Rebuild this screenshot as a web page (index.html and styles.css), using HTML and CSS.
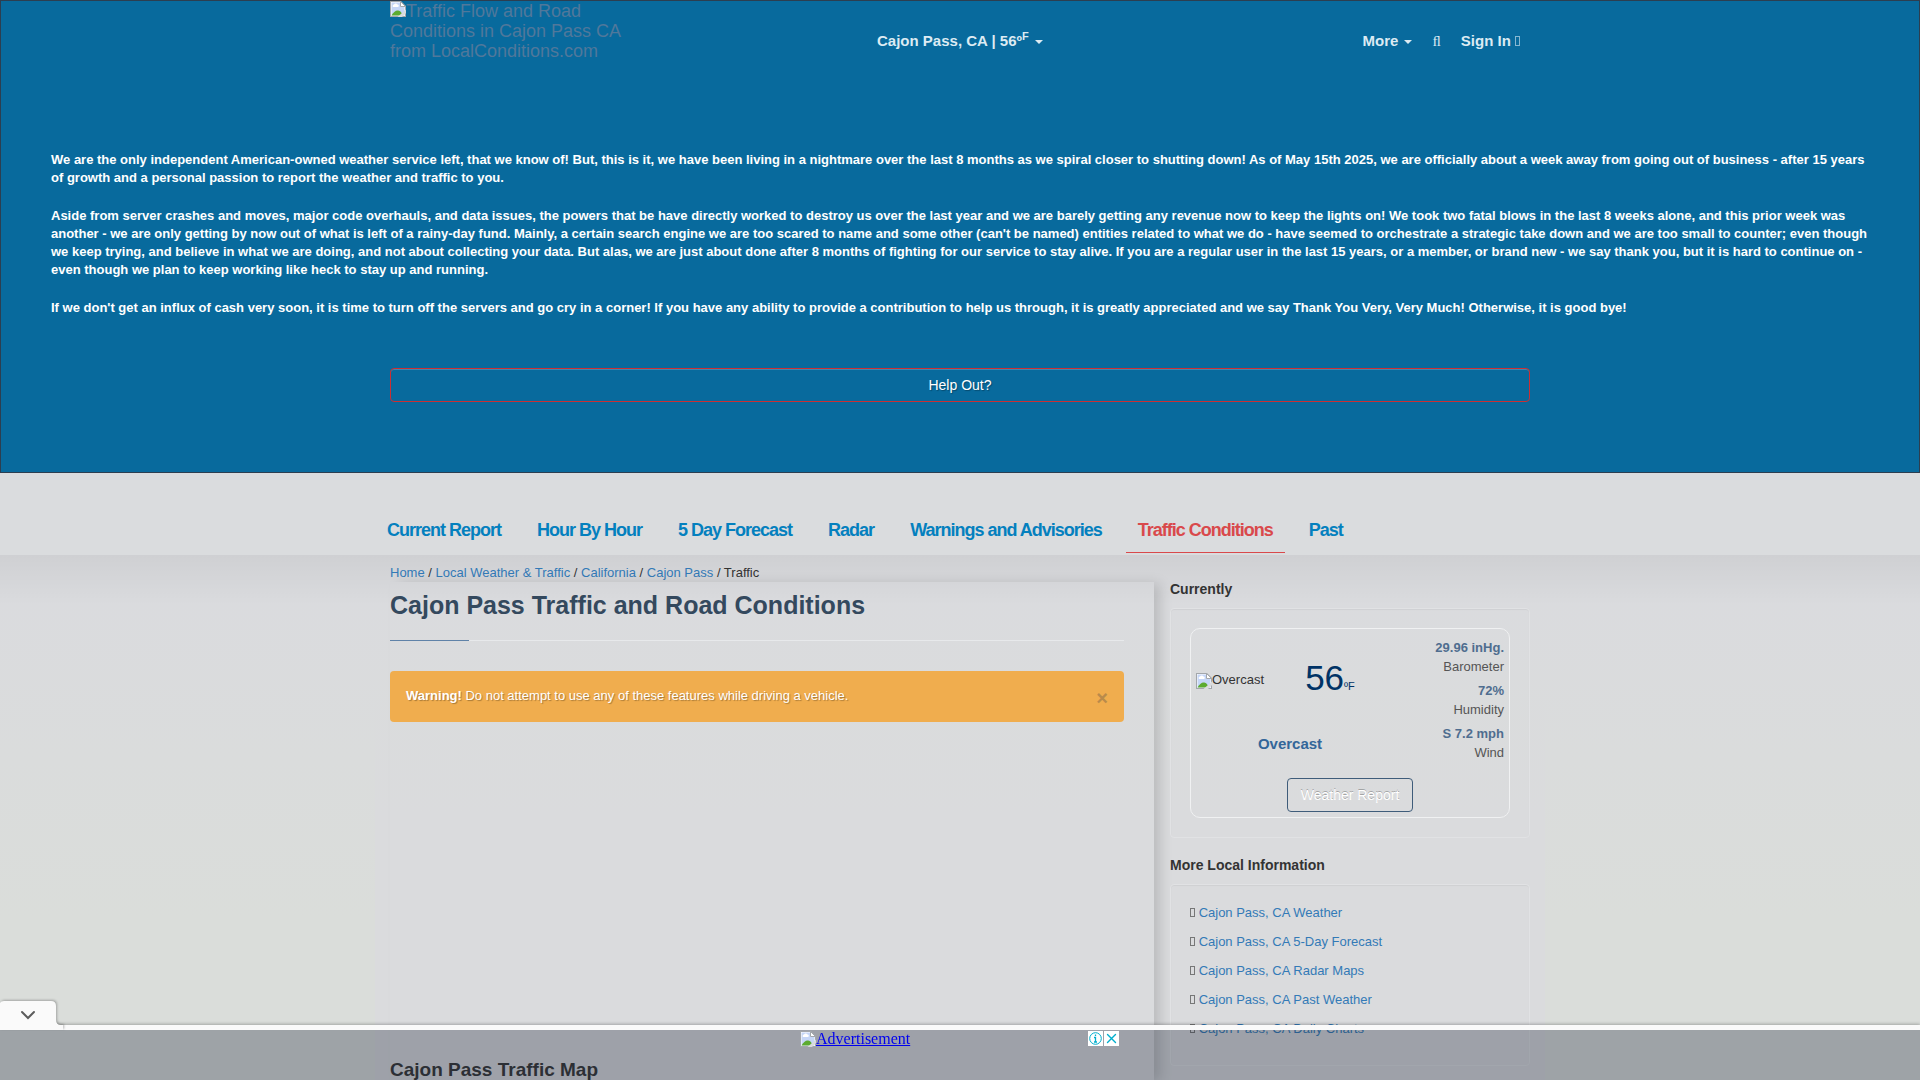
FILE: index.html
```html
<!DOCTYPE html>
<html lang="en">
<head>
<meta charset="utf-8">
<meta name="viewport" content="width=device-width, initial-scale=1">
<title>Cajon Pass Traffic and Road Conditions</title>
<link rel="stylesheet" href="styles.css">
</head>
<body>
<svg width="0" height="0" class="sprite" aria-hidden="true">
  <symbol id="missing" viewBox="0 0 16 16">
    <path d="M0 0h11l5 5v11H0z" fill="#a3a7ab"/>
    <path d="M1 1h9.500l4.500 4.500V15H1z" fill="#fff"/>
    <path d="M1.500 1.500h9v4h4v9h-13z" fill="#c5d6f7"/>
    <path d="M3 6a1.500 1.500 0 0 1 1-2.500 2 2 0 0 1 3.500 0A1.300 1.300 0 0 1 8 6z" fill="#fff"/>
    <path d="M1.500 14.500c1.500-3 4-5 6-5s4 1 5 5z" fill="#5cab30"/>
    <path d="M10.500 .5v5h5z" fill="#fff" stroke="#a3a7ab"/>
    <path d="M7.500 16l8.500-7.500V12l-4 4z" class="tear"/>
  </symbol>
</svg>

<header class="masthead">
  <div class="container topbar">
    <a class="logo" href="#"><svg class="missing" aria-hidden="true"><use href="#missing"/></svg>Traffic Flow and Road Conditions in Cajon Pass CA from LocalConditions.com</a>
    <a class="place" href="#">Cajon Pass, CA | 56º<sup>F</sup> <span class="caret"></span></a>
    <nav class="tools" aria-label="Account">
      <a href="#">More <span class="caret"></span></a>
      <a href="#" aria-label="Search"><span class="search-glyph">ﬂ</span></a>
      <a href="#">Sign In <span class="box-glyph"></span></a>
    </nav>
  </div>
  <div class="appeal">
    <p>We are the only independent American-owned weather service left, that we know of! But, this is it, we have been living in a nightmare over the last 8 months as we spiral closer to shutting down! As of May 15th 2025, we are officially about a week away from going out of business - after 15 years of growth and a personal passion to report the weather and traffic to you.</p>
    <p>Aside from server crashes and moves, major code overhauls, and data issues, the powers that be have directly worked to destroy us over the last year and we are barely getting any revenue now to keep the lights on! We took two fatal blows in the last 8 weeks alone, and this prior week was another - we are only getting by now out of what is left of a rainy-day fund. Mainly, a certain search engine we are too scared to name and some other (can't be named) entities related to what we do - have seemed to orchestrate a strategic take down and we are too small to counter; even though we keep trying, and believe in what we are doing, and not about collecting your data. But alas, we are just about done after 8 months of fighting for our service to stay alive. If you are a regular user in the last 15 years, or a member, or brand new - we say thank you, but it is hard to continue on - even though we plan to keep working like heck to stay up and running.</p>
    <p>If we don't get an influx of cash very soon, it is time to turn off the servers and go cry in a corner! If you have any ability to provide a contribution to help us through, it is greatly appreciated and we say Thank You Very, Very Much! Otherwise, it is good bye!</p>
  </div>
  <div class="container">
    <button class="help" type="button">Help Out?</button>
  </div>
</header>

<nav class="sections" aria-label="Reports">
  <div class="container section-links">
    <a href="#">Current Report</a>
    <a href="#">Hour By Hour</a>
    <a href="#">5 Day Forecast</a>
    <a href="#">Radar</a>
    <a href="#">Warnings and Advisories</a>
    <a href="#" class="active" aria-current="page">Traffic Conditions</a>
    <a href="#">Past</a>
  </div>
</nav>

<div class="page">
  <div class="container columns">
    <div class="primary">
      <nav class="crumbs" aria-label="Breadcrumb"><a href="#">Home</a> / <a href="#">Local Weather &amp; Traffic</a> / <a href="#">California</a> / <a href="#">Cajon Pass</a> / Traffic</nav>
      <main class="content">
        <h1>Cajon Pass Traffic and Road Conditions</h1>
        <div class="alert" role="alert">
          <span><strong>Warning!</strong> Do not attempt to use any of these features while driving a vehicle.</span>
          <button class="close" type="button" aria-label="Close">×</button>
        </div>
        <h2>Cajon Pass Traffic Map</h2>
      </main>
    </div>
    <aside class="sidebar">
      <h3>Currently</h3>
      <section class="well">
        <div class="now">
          <div class="sky"><svg class="missing" aria-hidden="true"><use href="#missing"/></svg>Overcast</div>
          <div class="temp">56<small>ºF</small></div>
          <div class="summary">Overcast</div>
          <dl class="readings">
            <div><dd>29.96 inHg.</dd><dt>Barometer</dt></div>
            <div><dd>72%</dd><dt>Humidity</dt></div>
            <div><dd>S 7.2 mph</dd><dt>Wind</dt></div>
          </dl>
          <button class="report" type="button">Weather Report</button>
        </div>
      </section>
      <h3>More Local Information</h3>
      <section class="well">
        <ul class="links">
          <li><span class="box-glyph"></span> <a href="#">Cajon Pass, CA Weather</a></li>
          <li><span class="box-glyph"></span> <a href="#">Cajon Pass, CA 5-Day Forecast</a></li>
          <li><span class="box-glyph"></span> <a href="#">Cajon Pass, CA Radar Maps</a></li>
          <li><span class="box-glyph"></span> <a href="#">Cajon Pass, CA Past Weather</a></li>
          <li><span class="box-glyph"></span> <a href="#">Cajon Pass, CA Daily Charts</a></li>
        </ul>
      </section>
    </aside>
  </div>
</div>

<div class="ad-bar">
  <button class="ad-toggle" type="button" aria-label="Collapse">
    <svg width="63" height="29" viewBox="0 0 63 29" aria-hidden="true">
      <path d="M0 29V2q1-2 4-2h47q5 0 5 5v14q0 5 5 5h2v5z" fill="#fafafa"/>
      <path d="M22 11l6 6 6-6" fill="none" stroke="#5c5c5c" stroke-width="2" stroke-linecap="round"/>
    </svg>
  </button>
  <div class="ad">
    <a href="#"><svg class="missing" aria-hidden="true"><use href="#missing"/></svg>Advertisement</a>
    <div class="ad-choices">
      <svg width="15" height="15" viewBox="0 0 15 15" aria-hidden="true"><path d="M0 0h15v15H0z" fill="#fff"/><circle cx="7.500" cy="7.500" r="5.800" fill="none" stroke="#00aecd"/><path d="M7.500 3.500v1.500M6 6.500h1.500v4M6 11h3" fill="none" stroke="#00aecd" stroke-width="1.300"/></svg>
      <svg width="15" height="15" viewBox="0 0 15 15" aria-hidden="true"><path d="M0 0h15v15H0z" fill="#fff"/><path d="M3.500 3.500l8 8M11.500 3.500l-8 8" stroke="#00aecd" stroke-width="1.400" stroke-linecap="round"/></svg>
    </div>
  </div>
</div>
</body>
</html>
```
FILE: styles.css
```css
* { box-sizing: border-box; }

body {
  margin: 0;
  min-height: 100vh;
  display: flex;
  flex-direction: column;
  font: 13px/19px "Liberation Sans", Arial, sans-serif;
  color: #333;
  background: linear-gradient(#dadbde 55%, #daddda 85%);
}

a { color: #337ab7; text-decoration: none; }
button { font-family: inherit; cursor: pointer; }
h1, h2, h3, p, dl, dd, ul { margin: 0; padding: 0; }

.sprite { position: absolute; }
.missing { width: 16px; height: 16px; vertical-align: bottom; }
.tear { fill: #dadbdd; }
.search-glyph { font-family: "Liberation Serif", serif; font-weight: 400; }
.box-glyph {
  display: inline-block;
  width: 5px;
  height: 9px;
  border: 1px solid currentColor;
  opacity: .6;
}
.container { width: 100%; max-width: 1170px; margin: 0 auto; padding: 0 15px; }

/* Header */
.masthead {
  background: #086a9d;
  border: 1px solid #2c3e50;
  padding-bottom: 70px;
}
.topbar { display: grid; grid-template-columns: 1fr auto 1fr; align-items: start; }
.logo { width: 240px; padding-bottom: 60px; color: #50789b; font-size: 18px; line-height: 20px; }
.logo .missing { vertical-align: baseline; }
.logo .tear { fill: #086a9d; }
.place, .tools { padding-top: 30px; font-size: 15px; font-weight: 700; line-height: 20px; }
.place, .tools a { color: #dcebf3; }
.place sup { font-size: 11px; line-height: 0; }
.tools { display: flex; justify-content: flex-end; gap: 20px; padding-right: 10px; }
.tools .box-glyph { height: 10px; }
.caret {
  display: inline-block;
  margin-left: 2px;
  vertical-align: middle;
  border: 4px solid transparent;
  border-top-color: currentColor;
  border-bottom: 0;
}
.appeal { padding: 30px 50px 51px; color: #fff; font-weight: 700; line-height: 18px; }
.appeal p + p { margin-top: 20px; }
.help {
  display: block;
  width: 100%;
  height: 34px;
  border: 1px solid #cc2f33;
  border-radius: 4px;
  background: none;
  box-shadow: inset 0 1px 0 rgba(255, 255, 255, .2);
  color: #fff;
  font-size: 14px;
  text-shadow: 1px 1px 1px rgba(0, 0, 0, .3);
}

/* Section tabs */
.sections { padding: 35px 0 2px; background: #dadcde; }
.section-links { display: flex; gap: 12px; padding: 0; }
.section-links a {
  padding: 12px 12px 11px;
  border-bottom: 1px solid transparent;
  color: #0480be;
  font-size: 18px;
  font-weight: 700;
  letter-spacing: -1px;
  line-height: 21px;
}
.section-links .active { color: #d9494b; border-color: #d9494b; }

/* Columns */
.page {
  flex: 1;
  display: flex;
  background: linear-gradient(rgba(0, 0, 0, .05), rgba(0, 0, 0, 0) 50px);
}
.columns {
  display: grid;
  grid-template-columns: minmax(0, 1fr) 360px;
  gap: 16px;
  background: linear-gradient(rgba(218, 219, 221, 0) 60px, #dadbdd 260px);
}
.primary { display: flex; flex-direction: column; }
.crumbs { padding: 8px 0 0; }
.content {
  flex: 1;
  padding-right: 30px;
  box-shadow: 8px 0 12px -2px rgba(0, 0, 0, .15);
}
h1 {
  padding: 8px 0 20px;
  color: #34495e;
  font-size: 25px;
  line-height: 30px;
  border-bottom: 1px solid;
  border-image: linear-gradient(90deg, #5f82a8 80px, #e7e9eb 80px) 1;
}
.alert {
  display: flex;
  justify-content: space-between;
  margin-top: 30px;
  padding: 15px 16px 14px;
  border-radius: 4px;
  background: #f0ad4e;
  color: #fff;
  text-shadow: 1px 1px 1px rgba(0, 0, 0, .3);
}
.close {
  padding: 3px 0 0;
  border: 0;
  background: none;
  color: #b98b4b;
  font-size: 20px;
  font-weight: 700;
  line-height: 19px;
}
h2 { margin-top: 338px; font-size: 19px; line-height: 20px; }

.sidebar { padding-top: 24px; }
h3 { font-size: 14px; line-height: 20px; }
.well {
  margin: 9px 0 17px;
  padding: 19px;
  border: 1px solid #e1e2e4;
  border-radius: 4px;
  box-shadow: inset 0 1px 1px rgba(0, 0, 0, .05);
}
.now {
  display: grid;
  grid-template-columns: 80px 108px 1fr;
  grid-template-rows: 82px 46px auto;
  align-items: center;
  padding: 9px 5px 5px;
  border: 1px solid #f0f1f2;
  border-radius: 10px;
}
.temp { padding-top: 6px; color: #036; font-size: 35px; line-height: 40px; text-align: center; }
.temp small { font-size: 11px; }
.summary { grid-column: 1 / 3; grid-row: 2; color: #369; font-size: 15px; font-weight: 700; text-align: center; }
.readings { grid-column: 3; grid-row: 1 / 3; align-self: start; display: grid; gap: 5px; text-align: right; }
.readings div { display: flex; flex-direction: column; }
.readings dd { color: #4f6d8f; font-weight: 700; }
.readings dt { color: #555; }
.report {
  grid-column: 1 / 4;
  justify-self: center;
  height: 34px;
  margin-top: 12px;
  padding: 0 13px;
  border: 1px solid #3f5c7a;
  border-radius: 4px;
  background: none;
  color: #fff;
  font-size: 14px;
  text-shadow: 0 -1px 0 rgba(0, 0, 0, .25);
}
.links { list-style: none; line-height: 17px; }
.links li { padding-bottom: 12px; }
.links li:last-child { padding-bottom: 9px; }

/* Anchored advertisement */
.ad-bar {
  position: fixed;
  inset: auto 0 0;
  height: 55px;
  border-top: 5px solid #fafafa;
  background: rgba(30, 40, 60, .32);
  background-clip: padding-box;
  box-shadow: 0 -1px 3px rgba(0, 0, 0, .25);
}
.ad-toggle {
  position: absolute;
  left: 0;
  bottom: 50px;
  padding: 0;
  border: 0;
  background: none;
  filter: drop-shadow(1px -1px 1px rgba(0, 0, 0, .25));
}
.ad-toggle svg { display: block; }
.ad { display: flex; justify-content: space-between; align-items: flex-start; width: 320px; margin: 0 auto; padding-right: 1px; }
.ad a { color: #00e; font: 16px/17px "Liberation Serif", serif; text-decoration: underline; }
.ad .tear { fill: #9ea1a8; }
.ad-choices { display: flex; gap: 1px; padding-top: 1px; }
```
